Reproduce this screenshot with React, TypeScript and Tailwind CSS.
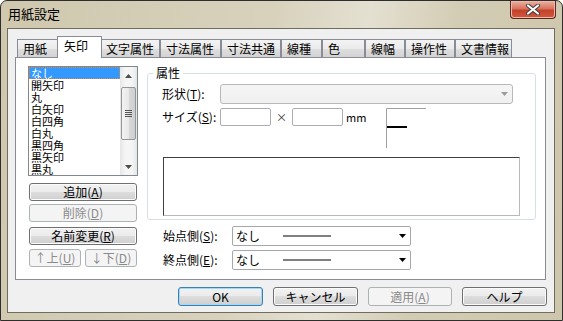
import React from "react";

const FONT = "font-['Noto_Sans_CJK_JP','Noto_Sans',sans-serif]";

const tabs = [
  { label: "用紙", w: 42 },
  { label: "矢印", w: 41 },
  { label: "文字属性", w: 60 },
  { label: "寸法属性", w: 61 },
  { label: "寸法共通", w: 60 },
  { label: "線種", w: 41 },
  { label: "色", w: 43 },
  { label: "線幅", w: 40 },
  { label: "操作性", w: 50 },
  { label: "文書情報", w: 57 },
];

const items = ["なし", "開矢印", "丸", "白矢印", "白四角", "白丸", "黒四角", "黒矢印", "黒丸"];

function Btn({
  children,
  className = "",
  disabled = false,
  focused = false,
}: {
  children: React.ReactNode;
  className?: string;
  disabled?: boolean;
  focused?: boolean;
}) {
  const look = disabled
    ? "border-[#adb2b5] bg-[#f4f4f4] text-[#8a8a8a]"
    : focused
      ? "border-[#3c7fb1] bg-[linear-gradient(to_bottom,#f2f2f2,#ebebeb_50%,#dddddd_50%,#cfcfcf)] shadow-[inset_0_0_0_1px_#9fd9f7] text-black"
      : "border-[#707070] bg-[linear-gradient(to_bottom,#f2f2f2,#ebebeb_50%,#dddddd_50%,#cfcfcf)] shadow-[inset_0_0_0_1px_#fbfbfb] text-black";
  return (
    <div
      className={`flex items-center justify-center rounded-[3px] border text-[12px] leading-none ${look} ${className}`}
    >
      {children}
    </div>
  );
}

function Arrow({ color = "#000" }: { color?: string }) {
  return (
    <svg width="7" height="4" viewBox="0 0 7 4">
      <path d="M0 0h7L3.5 4z" fill={color} />
    </svg>
  );
}

function EndCombo() {
  return (
    <div className="flex items-center w-[179px] h-[20px] border border-[#a5a7ad] rounded-[2px] bg-white pl-[3px] pr-[4px]">
      <span className="text-[12px] leading-none">なし</span>
      <svg width="48" height="2" className="ml-[23px]">
        <line x1="0" y1="1" x2="48" y2="1" stroke="#000" strokeWidth="1" />
      </svg>
      <div className="ml-auto">
        <Arrow />
      </div>
    </div>
  );
}

export default function App() {
  return (
    <div
      className={`${FONT} relative w-[563px] h-[321px] overflow-hidden rounded-t-[7px] border border-[#2e2e2e] bg-[linear-gradient(100deg,#cfc8ae,#d8d2bd_45%,#e4e0d1_60%,#d3ccb4_75%,#cdc6ac)] text-black`}
    >
      {/* title bar */}
      <div className="flex h-[27px]">
        <div className="pl-[7px] pt-[5px] text-[13px] leading-[15px]">用紙設定</div>
        <div className="ml-auto mr-[6px] flex h-[18px] w-[46px] items-center justify-center rounded-b-[4px] border border-t-0 border-[#5a2a22] bg-[linear-gradient(to_bottom,#eab3a5,#d8735c_45%,#c4412a_55%,#d1593f)] shadow-[inset_0_0_0_1px_#f0b8a8]">
          <svg width="14" height="11" viewBox="0 0 14 11">
            <path d="M2 1.5l10 8M12 1.5l-10 8" stroke="#3c3c3c" strokeWidth="4" strokeLinecap="round" />
            <path d="M2 1.5l10 8M12 1.5l-10 8" stroke="#fff" strokeWidth="2.2" strokeLinecap="round" />
          </svg>
        </div>
      </div>

      {/* client area */}
      <div className="ml-[6px] w-[548px] h-[285px] border border-[#6f6c60] bg-[#f0f0f0]">
        {/* tab strip */}
        <div className="ml-[9px] mt-[7px] flex h-[21px] items-end">
          {tabs.map((t, i) =>
            i === 1 ? (
              <div
                key={t.label}
                className="relative z-10 -mx-[2px] -mb-px flex h-[22px] items-start border border-b-0 border-[#898c95] bg-white pl-[6px] pt-[2px] text-[12px] leading-[13px]"
                style={{ width: t.w + 4 }}
              >
                {t.label}
              </div>
            ) : (
              <div
                key={t.label}
                className="flex h-[18px] items-center border border-b-0 border-[#898c95] bg-[linear-gradient(to_bottom,#f3f3f3,#ebebeb_50%,#dfdfdf_50%,#d3d3d3)] pl-[5px] text-[12px] leading-none"
                style={{ width: t.w }}
              >
                {t.label}
              </div>
            ),
          )}
        </div>

        {/* tab panel */}
        <div className="ml-[7px] flex h-[223px] w-[531px] border border-[#898c95] bg-white pl-[12px] pt-[8px]">
          {/* left column */}
          <div className="flex w-[110px] flex-col">
            <div className="flex h-[110px] border border-[#828790] bg-white">
              <div className="flex-1">
                {items.map((it, i) => (
                  <div
                    key={it}
                    className={`h-[12px] pl-[2px] text-[11px] leading-[12px] ${
                      i === 0 ? "bg-[#3399ff] text-white outline outline-1 -outline-offset-1 outline-dotted outline-[#d58a3a]" : ""
                    }`}
                  >
                    {it}
                  </div>
                ))}
              </div>
              {/* scrollbar */}
              <div className="flex w-[17px] flex-col bg-[linear-gradient(to_right,#e6e6e6,#f5f5f5_30%,#f5f5f5_70%,#e6e6e6)]">
                <div className="flex h-[17px] items-center justify-center">
                  <svg width="7" height="4" viewBox="0 0 7 4">
                    <path d="M0 4h7L3.5 0z" fill="#4d4d4d" />
                  </svg>
                </div>
                <div className="mx-[1px] mt-[3px] flex h-[53px] items-center justify-center rounded-[2px] border border-[#959595] bg-[linear-gradient(to_right,#f3f3f3,#e8e8e8_50%,#d8d8d8_50%,#cfcfcf)]">
                  <svg width="7" height="7" viewBox="0 0 7 7">
                    <path d="M0 0.5h7M0 2.5h7M0 4.5h7M0 6.5h7" stroke="#555" strokeWidth="1" />
                  </svg>
                </div>
                <div className="flex-1" />
                <div className="flex h-[17px] items-center justify-center">
                  <Arrow color="#4d4d4d" />
                </div>
              </div>
            </div>

            <div className="ml-[1px] mt-[7px] flex w-[108px] flex-col">
              <Btn className="h-[18px]">
                追加(<u>A</u>)
              </Btn>
              <Btn className="mt-[3px] h-[18px]" disabled>
                削除(<u>D</u>)
              </Btn>
              <Btn className="mt-[5px] h-[18px]">
                名前変更(<u>R</u>)
              </Btn>
              <div className="mt-[4px] flex gap-[4px]">
                <Btn className="h-[18px] w-[52px]" disabled>
                  ↑上(<u>U</u>)
                </Btn>
                <Btn className="h-[18px] w-[52px]" disabled>
                  ↓下(<u>D</u>)
                </Btn>
              </div>
            </div>
          </div>

          {/* right column */}
          <div className="ml-[9px] flex flex-col">
            <div className="relative mt-[7px] h-[147px] w-[389px] rounded-[3px] border border-[#d5dfe5] pl-[14px] pt-[10px]">
              <div className="absolute -top-[7px] left-[5px] bg-white px-[3px] text-[12px] leading-[12px]">属性</div>

              <div className="flex h-[20px] items-center">
                <div className="w-[58px] text-[12px] leading-none">
                  形状(<u>T</u>):
                </div>
                <div className="flex h-[20px] w-[293px] items-center justify-end rounded-[3px] border border-[#b5b9bc] bg-[linear-gradient(to_bottom,#f5f5f5,#f0f0f0)] pr-[4px]">
                  <Arrow color="#9a9a9a" />
                </div>
              </div>

              <div className="mt-[4px] flex items-start">
                <div className="flex h-[18px] w-[58px] items-center text-[12px] leading-none">
                  サイズ(<u>S</u>):
                </div>
                <div className="h-[18px] w-[51px] rounded-[2px] border border-[#abadb3] bg-white" />
                <div className="flex h-[18px] w-[21px] items-center justify-center text-[11px] leading-none text-[#333]">×</div>
                <div className="h-[18px] w-[51px] rounded-[2px] border border-[#abadb3] bg-white" />
                <div className="ml-[3px] flex h-[18px] items-center text-[11px] leading-none">mm</div>
                <svg width="40" height="40" className="ml-[20px]">
                  <path d="M0.5 40V0.5H40" fill="none" stroke="#a0a0a0" strokeWidth="1" />
                  <line x1="1" y1="19" x2="21" y2="19" stroke="#000" strokeWidth="2" />
                </svg>
              </div>

              <div className="ml-[1px] mt-[9px] h-[59px] w-[357px] border border-l-[#404040] border-t-[#404040] border-r-[#b9b9b9] border-b-[#b9b9b9] bg-white" />
            </div>

            <div className="ml-[16px] mt-[6px] flex items-center">
              <div className="w-[69px] text-[12px] leading-none">
                始点側(<u>S</u>):
              </div>
              <EndCombo />
            </div>
            <div className="ml-[16px] mt-[4px] flex items-center">
              <div className="w-[69px] text-[12px] leading-none">
                終点側(<u>E</u>):
              </div>
              <EndCombo />
            </div>
          </div>
        </div>

        {/* dialog buttons */}
        <div className="ml-[170px] mt-[7px] flex gap-[10px]">
          <Btn className="h-[19px] w-[85px]" focused>
            OK
          </Btn>
          <Btn className="h-[19px] w-[85px]">キャンセル</Btn>
          <Btn className="h-[19px] w-[84px]" disabled>
            適用(<u>A</u>)
          </Btn>
          <Btn className="h-[19px] w-[85px]">ヘルプ</Btn>
        </div>
      </div>
    </div>
  );
}
